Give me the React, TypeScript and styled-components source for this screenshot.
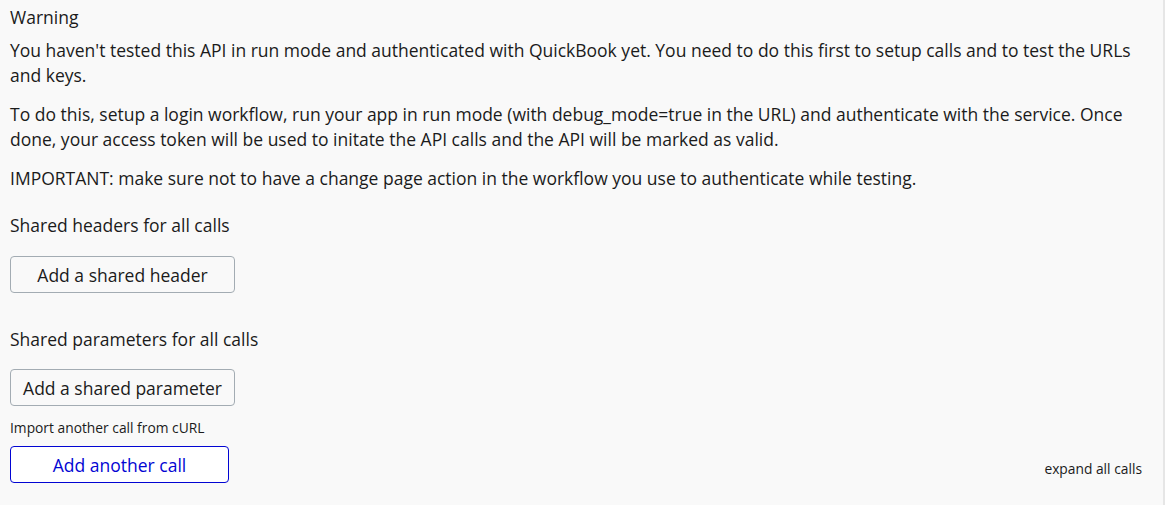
import styled, { createGlobalStyle } from "styled-components";

const GlobalStyle = createGlobalStyle`
  html, body {
    margin: 0;
    padding: 0;
    background: #ffffff;
  }
  body {
    font-family: "Open Sans", "Noto Sans", sans-serif;
    color: #1b1b1b;
  }
`;

const App = () => {
  return (
    <>
      <GlobalStyle />
      <Panel>
        <Title>Warning</Title>
        <Paragraph>
          You haven't tested this API in run mode and authenticated with
          QuickBook yet. You need to do this first to setup calls and to test
          the URLs and keys.
        </Paragraph>
        <Paragraph>
          To do this, setup a login workflow, run your app in run mode (with
          debug_mode=true in the URL) and authenticate with the service. Once
          done, your access token will be used to initate the API calls and the
          API will be marked as valid.
        </Paragraph>
        <Paragraph>
          IMPORTANT: make sure not to have a change page action in the workflow
          you use to authenticate while testing.
        </Paragraph>

        <Section $top={22}>
          <Label>Shared headers for all calls</Label>
          <Button>Add a shared header</Button>
        </Section>

        <Section $top={34} $gap={17}>
          <Label>Shared parameters for all calls</Label>
          <Button>Add a shared parameter</Button>
        </Section>

        <Footer>
          <div>
            <SmallText>Import another call from cURL</SmallText>
            <Button $primary $width={219}>
              Add another call
            </Button>
          </div>
          <SmallLink>expand all calls</SmallLink>
        </Footer>
      </Panel>
    </>
  );
};

const Panel = styled.div`
  box-sizing: border-box;
  width: 1165px;
  height: 505px;
  padding: 5px 0 0 10px;
  background: #f9f9f9;
  border-right: 2px solid #e6e6e6;
  overflow: hidden;
`;

const Title = styled.div`
  font-size: 17.5px;
  line-height: 25px;
  margin-bottom: 8px;
`;

const Paragraph = styled.p`
  margin: 0 0 14px;
  padding-right: 20px;
  font-size: 17.5px;
  line-height: 25px;
`;

const Section = styled.div<{ $top?: number; $gap?: number }>`
  margin-top: ${(p) => p.$top ?? 20}px;
  display: flex;
  flex-direction: column;
  align-items: flex-start;
  gap: ${(p) => p.$gap ?? 18}px;
`;

const Label = styled.div`
  font-size: 17.5px;
  line-height: 25px;
`;

const Button = styled.button<{ $primary?: boolean; $width?: number }>`
  box-sizing: border-box;
  width: ${(p) => p.$width ?? 225}px;
  height: 37px;
  padding: 0;
  border-radius: 4px;
  font-family: "Open Sans", "Noto Sans", sans-serif;
  font-size: 17.5px;
  cursor: pointer;
  background: ${(p) => (p.$primary ? "#ffffff" : "#f9f9f9")};
  color: ${(p) => (p.$primary ? "#0205d3" : "#1b1b1b")};
  border: 1px solid ${(p) => (p.$primary ? "#0205d3" : "#a3acb3")};
`;

const Footer = styled.div`
  margin-top: 12px;
  padding-right: 21px;
  display: flex;
  justify-content: space-between;
  align-items: flex-end;
`;

const SmallText = styled.div`
  font-size: 13.8px;
  line-height: 20px;
  margin-bottom: 8px;
`;

const SmallLink = styled.div`
  font-size: 13.8px;
  line-height: 20px;
  margin-bottom: 4px;
  cursor: pointer;
`;

export default App;
